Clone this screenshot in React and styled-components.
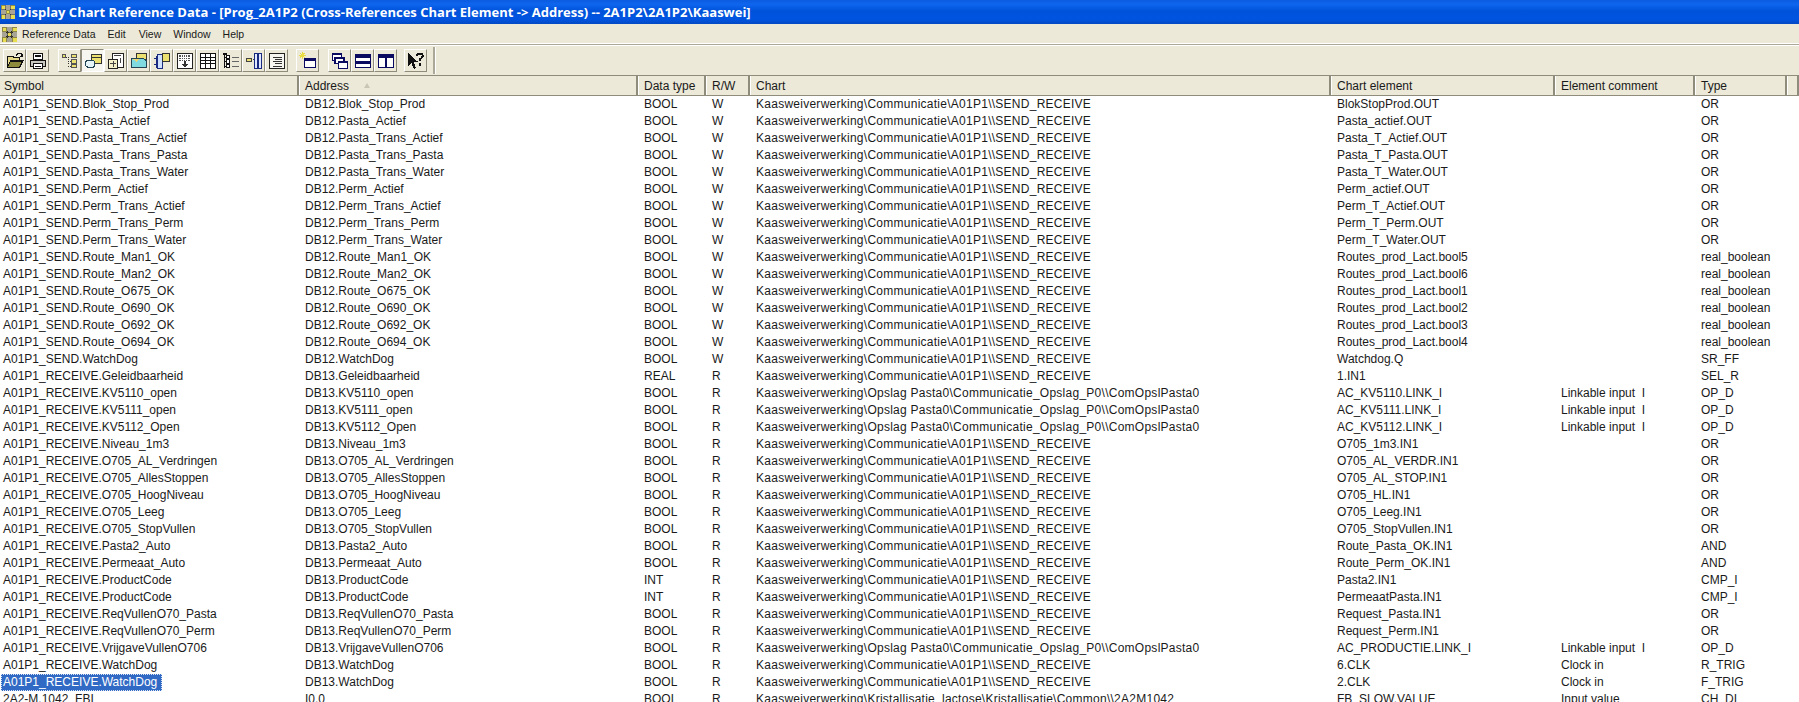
import React from 'react';
import styled, { createGlobalStyle } from 'styled-components';

const GlobalStyle = createGlobalStyle`
  html, body {
    margin: 0;
    padding: 0;
    background: #fff;
  }
`;

const COLUMNS = '299px 339px 68px 44px 581px 224px 140px 92px 12px';
const UI_FONT = '"Liberation Sans", Arial, sans-serif';
const CHART_COLUMN = 4;

const COMM = 'Kaasweiverwerking\\Communicatie\\A01P1\\\\SEND_RECEIVE';
const OPSLAG = 'Kaasweiverwerking\\Opslag Pasta0\\Communicatie_Opslag_P0\\\\ComOpslPasta0';
const KRIST = 'Kaasweiverwerking\\Kristallisatie_lactose\\Kristallisatie\\Common\\\\2A2M1042';
const LINK = 'Linkable input  I';

const rows = [
  ['A01P1_SEND.Blok_Stop_Prod', 'DB12.Blok_Stop_Prod', 'BOOL', 'W', COMM, 'BlokStopProd.OUT', '', 'OR'],
  ['A01P1_SEND.Pasta_Actief', 'DB12.Pasta_Actief', 'BOOL', 'W', COMM, 'Pasta_actief.OUT', '', 'OR'],
  ['A01P1_SEND.Pasta_Trans_Actief', 'DB12.Pasta_Trans_Actief', 'BOOL', 'W', COMM, 'Pasta_T_Actief.OUT', '', 'OR'],
  ['A01P1_SEND.Pasta_Trans_Pasta', 'DB12.Pasta_Trans_Pasta', 'BOOL', 'W', COMM, 'Pasta_T_Pasta.OUT', '', 'OR'],
  ['A01P1_SEND.Pasta_Trans_Water', 'DB12.Pasta_Trans_Water', 'BOOL', 'W', COMM, 'Pasta_T_Water.OUT', '', 'OR'],
  ['A01P1_SEND.Perm_Actief', 'DB12.Perm_Actief', 'BOOL', 'W', COMM, 'Perm_actief.OUT', '', 'OR'],
  ['A01P1_SEND.Perm_Trans_Actief', 'DB12.Perm_Trans_Actief', 'BOOL', 'W', COMM, 'Perm_T_Actief.OUT', '', 'OR'],
  ['A01P1_SEND.Perm_Trans_Perm', 'DB12.Perm_Trans_Perm', 'BOOL', 'W', COMM, 'Perm_T_Perm.OUT', '', 'OR'],
  ['A01P1_SEND.Perm_Trans_Water', 'DB12.Perm_Trans_Water', 'BOOL', 'W', COMM, 'Perm_T_Water.OUT', '', 'OR'],
  ['A01P1_SEND.Route_Man1_OK', 'DB12.Route_Man1_OK', 'BOOL', 'W', COMM, 'Routes_prod_Lact.bool5', '', 'real_boolean'],
  ['A01P1_SEND.Route_Man2_OK', 'DB12.Route_Man2_OK', 'BOOL', 'W', COMM, 'Routes_prod_Lact.bool6', '', 'real_boolean'],
  ['A01P1_SEND.Route_O675_OK', 'DB12.Route_O675_OK', 'BOOL', 'W', COMM, 'Routes_prod_Lact.bool1', '', 'real_boolean'],
  ['A01P1_SEND.Route_O690_OK', 'DB12.Route_O690_OK', 'BOOL', 'W', COMM, 'Routes_prod_Lact.bool2', '', 'real_boolean'],
  ['A01P1_SEND.Route_O692_OK', 'DB12.Route_O692_OK', 'BOOL', 'W', COMM, 'Routes_prod_Lact.bool3', '', 'real_boolean'],
  ['A01P1_SEND.Route_O694_OK', 'DB12.Route_O694_OK', 'BOOL', 'W', COMM, 'Routes_prod_Lact.bool4', '', 'real_boolean'],
  ['A01P1_SEND.WatchDog', 'DB12.WatchDog', 'BOOL', 'W', COMM, 'Watchdog.Q', '', 'SR_FF'],
  ['A01P1_RECEIVE.Geleidbaarheid', 'DB13.Geleidbaarheid', 'REAL', 'R', COMM, '1.IN1', '', 'SEL_R'],
  ['A01P1_RECEIVE.KV5110_open', 'DB13.KV5110_open', 'BOOL', 'R', OPSLAG, 'AC_KV5110.LINK_I', LINK, 'OP_D'],
  ['A01P1_RECEIVE.KV5111_open', 'DB13.KV5111_open', 'BOOL', 'R', OPSLAG, 'AC_KV5111.LINK_I', LINK, 'OP_D'],
  ['A01P1_RECEIVE.KV5112_Open', 'DB13.KV5112_Open', 'BOOL', 'R', OPSLAG, 'AC_KV5112.LINK_I', LINK, 'OP_D'],
  ['A01P1_RECEIVE.Niveau_1m3', 'DB13.Niveau_1m3', 'BOOL', 'R', COMM, 'O705_1m3.IN1', '', 'OR'],
  ['A01P1_RECEIVE.O705_AL_Verdringen', 'DB13.O705_AL_Verdringen', 'BOOL', 'R', COMM, 'O705_AL_VERDR.IN1', '', 'OR'],
  ['A01P1_RECEIVE.O705_AllesStoppen', 'DB13.O705_AllesStoppen', 'BOOL', 'R', COMM, 'O705_AL_STOP.IN1', '', 'OR'],
  ['A01P1_RECEIVE.O705_HoogNiveau', 'DB13.O705_HoogNiveau', 'BOOL', 'R', COMM, 'O705_HL.IN1', '', 'OR'],
  ['A01P1_RECEIVE.O705_Leeg', 'DB13.O705_Leeg', 'BOOL', 'R', COMM, 'O705_Leeg.IN1', '', 'OR'],
  ['A01P1_RECEIVE.O705_StopVullen', 'DB13.O705_StopVullen', 'BOOL', 'R', COMM, 'O705_StopVullen.IN1', '', 'OR'],
  ['A01P1_RECEIVE.Pasta2_Auto', 'DB13.Pasta2_Auto', 'BOOL', 'R', COMM, 'Route_Pasta_OK.IN1', '', 'AND'],
  ['A01P1_RECEIVE.Permeaat_Auto', 'DB13.Permeaat_Auto', 'BOOL', 'R', COMM, 'Route_Perm_OK.IN1', '', 'AND'],
  ['A01P1_RECEIVE.ProductCode', 'DB13.ProductCode', 'INT', 'R', COMM, 'Pasta2.IN1', '', 'CMP_I'],
  ['A01P1_RECEIVE.ProductCode', 'DB13.ProductCode', 'INT', 'R', COMM, 'PermeaatPasta.IN1', '', 'CMP_I'],
  ['A01P1_RECEIVE.ReqVullenO70_Pasta', 'DB13.ReqVullenO70_Pasta', 'BOOL', 'R', COMM, 'Request_Pasta.IN1', '', 'OR'],
  ['A01P1_RECEIVE.ReqVullenO70_Perm', 'DB13.ReqVullenO70_Perm', 'BOOL', 'R', COMM, 'Request_Perm.IN1', '', 'OR'],
  ['A01P1_RECEIVE.VrijgaveVullenO706', 'DB13.VrijgaveVullenO706', 'BOOL', 'R', OPSLAG, 'AC_PRODUCTIE.LINK_I', LINK, 'OP_D'],
  ['A01P1_RECEIVE.WatchDog', 'DB13.WatchDog', 'BOOL', 'R', COMM, '6.CLK', 'Clock in', 'R_TRIG'],
  ['A01P1_RECEIVE.WatchDog', 'DB13.WatchDog', 'BOOL', 'R', COMM, '2.CLK', 'Clock in', 'F_TRIG'],
  ['2A2-M.1042_FBI', 'I0.0', 'BOOL', 'R', KRIST, 'FB_SLOW.VALUE', 'Input value', 'CH_DI'],
];

const headers = ['Symbol', 'Address', 'Data type', 'R/W', 'Chart', 'Chart element', 'Element comment', 'Type', ''];

const Window = styled.div`
  width: 1799px;
  height: 702px;
  overflow: hidden;
  background: #fff;
  color: #1a1a1a;
  font-family: ${UI_FONT};
  font-size: 12px;
`;

const TitleBar = styled.div`
  height: 24px;
  display: flex;
  align-items: center;
  gap: 3px;
  padding-left: 1px;
  background: linear-gradient(#0a5be0 0%, #0f66ee 18%, #0052da 45%, #0054e0 80%, #0349c4 100%);
  color: #fff;
  font-family: "Open Sans", "DejaVu Sans", sans-serif;
  font-weight: bold;
  font-size: 13px;
  white-space: pre;
`;

const MenuBar = styled.div`
  height: 20px;
  display: flex;
  align-items: center;
  padding-left: 2px;
  background: #ece9d8;
  border-bottom: 1px solid #aca899;
  box-shadow: inset 0 -1px 0 #fff;
  font-size: 10.5px;
`;

const MenuItem = styled.span`
  margin-left: ${(p) => p.$gap}px;
`;

const Toolbar = styled.div`
  height: 30px;
  display: flex;
  align-items: center;
  padding-left: 3px;
  background: #ece9d8;
  border-top: 1px solid #fff;
  box-sizing: border-box;
`;

const ToolGroup = styled.div`
  display: flex;
  margin-right: ${(p) => p.$gap}px;
`;

const ToolButton = styled.div`
  width: 23px;
  height: 23px;
  box-sizing: border-box;
  display: flex;
  align-items: center;
  justify-content: center;
  background: ${(p) => (p.$pressed ? '#f6f5ef' : '#ece9d8')};
  border: 1px solid;
  border-color: ${(p) => (p.$pressed ? '#8f8c7c #fff #fff #8f8c7c' : '#fff #8f8c7c #8f8c7c #fff')};
`;

const ToolbarEnd = styled.div`
  width: 2px;
  height: 27px;
  background: #aca899;
  border-right: 1px solid #fff;
`;

const Row = styled.div`
  display: grid;
  grid-template-columns: ${COLUMNS};
  height: 17px;
  line-height: 17px;
  white-space: pre;
`;

const HeaderRow = styled(Row)`
  height: 21px;
  line-height: 20px;
  background: #ece9d8;
  border-top: 1px solid #8f8c7c;
  border-bottom: 1px solid #8f8c7c;
  box-sizing: border-box;
`;

const HeaderCell = styled.div`
  position: relative;
  box-sizing: border-box;
  padding-left: ${(p) => (p.$first ? 4 : 5)}px;
  border-right: 2px solid #8f8c7c;
  border-left: ${(p) => (p.$first ? 0 : 1)}px solid #fff;
  overflow: hidden;
`;

const SortArrow = styled.span`
  position: absolute;
  left: 64px;
  top: 7px;
  width: 0;
  height: 0;
  border-left: 3px solid transparent;
  border-right: 3px solid transparent;
  border-bottom: 5px solid #c9c6b6;
`;

const Cell = styled.div`
  padding-left: ${(p) => (p.$first ? 3 : 6)}px;
  letter-spacing: ${(p) => (p.$chart ? '0.26px' : 'normal')};
  overflow: visible;
`;

const Selected = styled.span`
  display: inline-block;
  margin-left: -2px;
  padding: 0 4px 0 1px;
  height: 17px;
  box-sizing: border-box;
  line-height: 15px;
  background: #316ac5;
  color: #fff;
  border: 1px dotted #dbe4f5;
`;

const Icon = ({ children }) => (
  <svg width="18" height="18" viewBox="0 0 16 16" shapeRendering="crispEdges">
    {children}
  </svg>
);

const AppGlyph = ({ size }) => (
  <svg width={size} height={size} viewBox="0 0 16 16" shapeRendering="crispEdges">
    <rect width="16" height="16" fill="#a8a496" />
    <path d="M3 3L13 13M13 3L3 13" stroke="#2c2c1c" strokeWidth="1.6" />
    <rect x="0" y="0" width="5" height="5" fill="#e8dc50" stroke="#444" strokeWidth=".6" />
    <rect x="11" y="0" width="5" height="5" fill="#e8dc50" stroke="#444" strokeWidth=".6" />
    <rect x="0" y="11" width="5" height="5" fill="#e8dc50" stroke="#444" strokeWidth=".6" />
    <rect x="11" y="11" width="5" height="5" fill="#e8dc50" stroke="#444" strokeWidth=".6" />
    <rect x="6" y="6" width="4" height="4" fill="#e8dc50" stroke="#444" strokeWidth=".6" />
  </svg>
);

const K = '#111';
const N = '#0a0a60';
const Y = '#ece070';
const C = '#7fdbe0';

const toolGroups = [
  {
    gap: 9,
    items: [
      <Icon key="open">
        <path d="M1 4h5l1 1h5v3H4L1 14z" fill="#e6d98a" stroke={K} />
        <path d="M4 8h11l-3 6H1z" fill="#8d8a3c" stroke={K} />
        <path d="M9 3q2-3 5-1" fill="none" stroke={K} />
        <path d="M15 1v3h-3z" fill={K} />
      </Icon>,
      <Icon key="print">
        <path d="M4 1.500h8v5H4z" fill="#fff" stroke={K} />
        <path d="M1.500 7.500h13v5h-13z" fill="#c8c8c0" stroke={K} />
        <path d="M4 10.500h8v4H4z" fill="#fff" stroke={K} />
        <path d="M5 3.500h6M5 12.500h6" stroke={K} />
      </Icon>,
    ],
  },
  {
    gap: 8,
    items: [
      <Icon key="tree">
        <path d="M2 4.500h6M6.500 4v9M6 8.500h3M6 12.500h3" stroke="#333" strokeDasharray="1 1" />
        <rect x="1" y="2" width="3" height="3" fill={Y} stroke="#555" />
        <rect x="9" y="2" width="5" height="3" fill={Y} stroke="#555" />
        <rect x="9" y="7" width="5" height="3" fill={Y} stroke="#555" />
        <rect x="9" y="11" width="5" height="3" fill={Y} stroke="#555" />
      </Icon>,
      <Icon key="overlap">
        <rect x="6.500" y="2.500" width="9" height="8" fill={Y} stroke="#333" />
        <path d="M6.500 4.500h9" stroke="#333" />
        <rect x="1.500" y="7.500" width="8" height="6" rx="2" fill="#e4f4f8" stroke="#245" />
      </Icon>,
      <Icon key="doc">
        <rect x="4.500" y="1.500" width="10" height="12" fill="#fff" stroke="#222" />
        <rect x="1.500" y="6.500" width="8" height="8" fill="#f4efc8" stroke="#222" />
        <path d="M6 3h6M12 5v5M3 10h5M6 8v5" stroke="#444" />
      </Icon>,
      <Icon key="fill">
        <path d="M5.500 1.500h9v8h-9z" fill={Y} stroke="#333" />
        <path d="M1.500 5.500h10l3 2v6h-13z" fill={C} stroke="#245" />
        <path d="M2 6l4 3 3-3" fill="#e8d878" />
      </Icon>,
      <Icon key="column">
        <rect x="3.500" y="2.500" width="5" height="12" rx="1" fill="#cfe0ff" stroke="#1a2a80" />
        <rect x="8.500" y="1.500" width="6" height="7" fill={Y} stroke="#333" />
        <path d="M1 6h2M1 11h2" stroke="#1a2a80" />
      </Icon>,
      <Icon key="grid-down">
        <rect x="1.500" y="1.500" width="13" height="13" fill="#fff" stroke="#222" />
        <path d="M3 3.500h10M3 5.500h10M3 7.500h10" stroke="#555" strokeDasharray="1 1" />
        <path d="M7 8h2v3h2l-3 3-3-3h2z" fill="#333" />
      </Icon>,
      <Icon key="table">
        <rect x="1.500" y="1.500" width="13" height="13" fill="#fff" stroke="#111" />
        <path d="M1.500 4.500h13M1.500 7.500h13M1.500 10.500h13M5.500 2v12M10.500 2v12" stroke="#111" />
      </Icon>,
      <Icon key="list">
        <path d="M2.500 2v12M3 4.500h1M3 8.500h1M3 12.500h1" stroke="#111" />
        <rect x="1" y="1" width="3" height="2" fill="#111" />
        <rect x="4" y="3" width="3" height="3" fill="#fff" stroke="#111" />
        <rect x="4" y="7" width="3" height="3" fill="#fff" stroke="#111" />
        <rect x="4" y="11" width="3" height="3" fill="#fff" stroke="#111" />
        <path d="M9 4.500h6M9 8.500h6M9 12.500h6" stroke="#666" />
      </Icon>,
      <Icon key="connect">
        <rect x="1.500" y="5.500" width="4" height="3" fill={Y} stroke="#444" />
        <path d="M5.500 7h3" stroke="#444" strokeDasharray="1 1" />
        <rect x="8.500" y="1.500" width="6" height="13" fill="#dfe8ff" stroke="#1a2a80" />
        <path d="M11.500 2v12" stroke="#1a2a80" />
      </Icon>,
      <Icon key="text">
        <rect x="1.500" y="1.500" width="13" height="13" fill="#f6f5ef" stroke="#222" />
        <path d="M4 4.500h8M6 6.500h6M4 8.500h8M6 10.500h6M4 12.500h8" stroke="#333" />
      </Icon>,
    ],
  },
  {
    gap: 9,
    items: [
      <Icon key="new">
        <path d="M3 0v6M0 3h6M1 1l4 4M5 1L1 5" stroke="#e8dc40" />
        <rect x="4.500" y="5.500" width="10" height="8" fill="#fff" stroke={N} />
        <rect x="4" y="5" width="11" height="3" fill={N} />
      </Icon>,
    ],
  },
  {
    gap: 7,
    items: [
      <Icon key="cascade">
        <rect x="1.500" y="1.500" width="8" height="6" fill="#fff" stroke={N} />
        <rect x="1" y="1" width="9" height="2" fill={N} />
        <rect x="3.500" y="4.500" width="8" height="6" fill="#fff" stroke={N} />
        <rect x="3" y="4" width="9" height="2" fill={N} />
        <rect x="6.500" y="8.500" width="8" height="6" fill="#fff" stroke={N} />
        <rect x="6" y="8" width="9" height="2" fill={N} />
      </Icon>,
      <Icon key="tile-h">
        <rect x="1.500" y="2.500" width="13" height="11" fill="#fff" stroke={N} />
        <rect x="1" y="2" width="14" height="3" fill={N} />
        <rect x="1" y="8" width="14" height="3" fill={N} />
      </Icon>,
      <Icon key="tile-v">
        <rect x="1.500" y="2.500" width="13" height="11" fill="#fff" stroke={N} />
        <rect x="1" y="2" width="14" height="3" fill={N} />
        <path d="M8 3v10" stroke={N} />
      </Icon>,
    ],
  },
  {
    gap: 6,
    items: [
      <Icon key="help">
        <path d="M1 1v12l3-3 2 5 2-1-2-5h4z" fill="#111" />
        <path d="M9 3.500q0-2 2.500-2t2.500 2q0 1.500-2.500 3v1.500" fill="none" stroke="#111" strokeWidth="1.800" />
        <rect x="10.500" y="10" width="2" height="2" fill="#111" />
      </Icon>,
    ],
  },
];

// the pressed button is the second one of the view group
const isPressed = (g, i) => g === 1 && i === 1;

const App = () => (
  <Window>
    <GlobalStyle />
    <TitleBar>
      <AppGlyph size={14} />
      Display Chart Reference Data - [Prog_2A1P2 (Cross-References Chart Element -&gt; Address) -- 2A1P2\2A1P2\Kaaswei]
    </TitleBar>
    <MenuBar>
      <AppGlyph size={15} />
      <MenuItem $gap={5}>Reference Data</MenuItem>
      <MenuItem $gap={12}>Edit</MenuItem>
      <MenuItem $gap={13}>View</MenuItem>
      <MenuItem $gap={12}>Window</MenuItem>
      <MenuItem $gap={12}>Help</MenuItem>
    </MenuBar>
    <Toolbar>
      {toolGroups.map((group, g) => (
        <ToolGroup key={g} $gap={group.gap}>
          {group.items.map((icon, i) => (
            <ToolButton key={i} $pressed={isPressed(g, i)}>
              {icon}
            </ToolButton>
          ))}
        </ToolGroup>
      ))}
      <ToolbarEnd />
    </Toolbar>
    <HeaderRow>
      {headers.map((h, i) => (
        <HeaderCell key={i} $first={i === 0}>
          {h}
          {h === 'Address' && <SortArrow />}
        </HeaderCell>
      ))}
    </HeaderRow>
    {rows.map((row, r) => (
      <Row key={r}>
        {row.map((text, c) => (
          <Cell key={c} $first={c === 0} $chart={c === CHART_COLUMN}>
            {r === 34 && c === 0 ? <Selected>{text}</Selected> : text}
          </Cell>
        ))}
      </Row>
    ))}
  </Window>
);

export default App;
